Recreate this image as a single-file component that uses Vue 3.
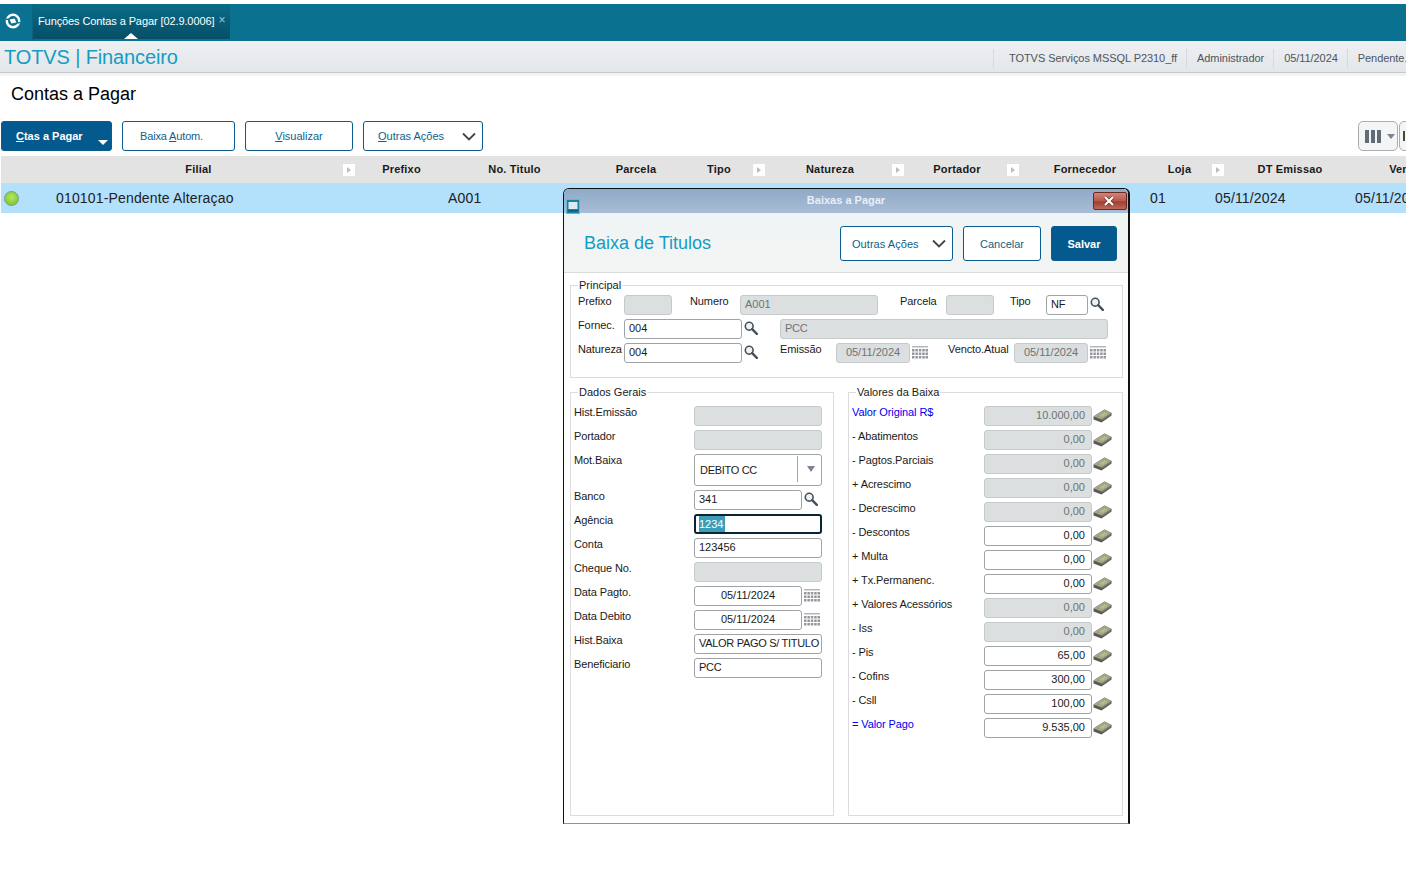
<template>
  <div class="page">
    <svg class="sprite" aria-hidden="true">
      <symbol id="i-search" viewBox="0 0 14 14">
        <circle cx="5.2" cy="5.2" r="3.9" fill="#eef2f4" stroke="#46505a" stroke-width="1.6" />
        <path d="M8.2 8.2l4.6 4.6" stroke="#46505a" stroke-width="2.4" stroke-linecap="round" />
      </symbol>
      <symbol id="i-cal" viewBox="0 0 16 14">
        <path d="M0 0h16v1.5H0z" fill="#b4b7ba" />
        <path
          d="M0 3h2.5v2.5H0zM3.4 3h2.5v2.5H3.4zM6.8 3h2.5v2.5H6.8zM10.2 3h2.5v2.5h-2.5zM13.5 3H16v2.5h-2.5zM0 6.5h2.5V9H0zM3.4 6.5h2.5V9H3.4zM6.8 6.5h2.5V9H6.8zM10.2 6.5h2.5V9h-2.5zM13.5 6.5H16V9h-2.5zM0 10h2.5v2.5H0zM3.4 10h2.5v2.5H3.4zM6.8 10h2.5v2.5H6.8zM10.2 10h2.5v2.5h-2.5zM13.5 10H16v2.5h-2.5z"
          fill="#93979b"
        />
      </symbol>
      <symbol id="i-money" viewBox="0 0 19 14">
        <path d="M0.5 7.5L11.5 0.5 18.5 4 18.5 6.5 8.5 13.5 0.5 10.5z" fill="#5e584e" />
        <path d="M0.5 7.5L11.5 0.5 18.5 4 8.5 10.5z" fill="#a3a093" />
        <path d="M6 6.6L11.3 3 14.8 4.8 9.2 8.2z" fill="#a5c676" />
        <path d="M8.5 10.5L18.5 4V5.2L8.5 11.8z" fill="#878377" />
      </symbol>
    </svg>

    <header class="topbar">
      <div class="logo">
        <svg width="16" height="16" viewBox="0 0 16 16">
          <circle cx="8" cy="8" r="6.2" fill="none" stroke="#fff" stroke-width="2.4" />
          <path d="M1 6.5L6 5.6M10 10.4L15 9.5" stroke="#0b7190" stroke-width="1.4" />
          <path d="M4.6 6.4L9.6 5.6 11.4 9.6 6.4 10.4z" fill="#fff" />
        </svg>
      </div>
      <div class="tab">
        <span>Funções Contas a Pagar [02.9.0006]</span>
        <span class="tab-close">×</span>
      </div>
    </header>

    <div class="module-bar">
      <div class="module-title">TOTVS | Financeiro</div>
      <div class="module-info">
        <span v-for="item in infoItems" :key="item">{{ item }}</span>
      </div>
    </div>

    <h1 class="page-title">Contas a Pagar</h1>

    <div class="toolbar">
      <button class="btn primary wide"><u>C</u>tas a Pagar<i class="caret-white" /></button>
      <button class="btn baixa">Baixa <u>A</u>utom.</button>
      <button class="btn visualizar"><u>V</u>isualizar</button>
      <button class="btn outras">
        <span><u>O</u>utras Ações</span>
        <svg width="14" height="9" viewBox="0 0 14 9"><path d="M1 1.5l6 6 6-6" fill="none" stroke="#444" stroke-width="1.8" /></svg>
      </button>
      <div class="col-tools">
        <div class="col-btn">
          <i class="bar" /><i class="bar" /><i class="bar" />
          <i class="caret-gray" />
        </div>
        <div class="col-btn next"><i class="bar dark" /></div>
      </div>
    </div>

    <div class="grid">
      <div class="grid-head">
        <div
          v-for="col in columns"
          :key="col.label"
          class="head-cell"
          :style="{ width: col.w + 'px', paddingRight: (col.pad || 0) + 'px' }"
        >
          {{ col.label }}
          <i v-if="col.handle" class="handle" />
        </div>
      </div>
      <div class="grid-row">
        <div class="status"><i class="led" /></div>
        <div
          v-for="cell in rowCells"
          :key="cell.text + cell.w"
          class="row-cell"
          :style="{ width: cell.w + 'px' }"
        >
          {{ cell.text }}
        </div>
      </div>
    </div>

    <section class="dialog">
      <div class="dlg-title">
        <svg class="dlg-icon" width="14" height="15" viewBox="0 0 14 15">
          <rect x="0.5" y="0.5" width="13" height="14" fill="#1583a6" stroke="#6cb6cf" />
          <rect x="2.5" y="3" width="9" height="7" fill="#dfeaf0" />
          <rect x="2" y="11" width="10" height="1.5" fill="#0b5f7c" />
        </svg>
        <span>Baixas a Pagar</span>
        <button class="dlg-close">
          <svg width="14" height="10" viewBox="0 0 14 10">
            <path d="M2 1l8 8M10 1L2 9" stroke="#6d2a22" stroke-width="3.4" />
            <path d="M2 1l8 8M10 1L2 9" stroke="#fff" stroke-width="2.2" />
          </svg>
        </button>
      </div>

      <div class="dlg-head">
        <h2>Baixa de Titulos</h2>
        <div class="dlg-actions">
          <button class="btn act-outras">
            <span>Outras Ações</span>
            <svg width="14" height="9" viewBox="0 0 14 9"><path d="M1 1.5l6 6 6-6" fill="none" stroke="#444" stroke-width="1.8" /></svg>
          </button>
          <button class="btn act-cancel">Cancelar</button>
          <button class="btn primary act-save">Salvar</button>
        </div>
      </div>

      <div class="dlg-body">
        <div class="group principal">
          <span class="group-title">Principal</span>
          <div class="p-row">
            <label class="w46">Prefixo</label>
            <div class="field off w48" />
            <label class="w50 ml18">Numero</label>
            <div class="field off w138">A001</div>
            <label class="w46 ml22">Parcela</label>
            <div class="field off w48" />
            <label class="w36 ml16">Tipo</label>
            <div class="field w42 caps">NF</div>
            <svg class="ico-search"><use href="#i-search" /></svg>
          </div>
          <div class="p-row">
            <label class="w46">Fornec.</label>
            <div class="field w118">004</div>
            <svg class="ico-search"><use href="#i-search" /></svg>
            <div class="field off w328 ml22 caps">PCC</div>
          </div>
          <div class="p-row">
            <label class="w46">Natureza</label>
            <div class="field w118">004</div>
            <svg class="ico-search"><use href="#i-search" /></svg>
            <label class="w56 ml22">Emissão</label>
            <div class="field off date w74">05/11/2024</div>
            <svg class="ico-cal"><use href="#i-cal" /></svg>
            <label class="w66 ml20">Vencto.Atual</label>
            <div class="field off date w74">05/11/2024</div>
            <svg class="ico-cal"><use href="#i-cal" /></svg>
          </div>
        </div>

        <div class="lower">
          <div class="group dados">
            <span class="group-title">Dados Gerais</span>
            <div v-for="row in dadosRows" :key="row.label" class="d-row">
              <label>{{ row.label }}</label>
              <div v-if="row.kind === 'select'" class="field select">
                <span class="caps">{{ row.value }}</span>
                <i class="select-arrow" />
              </div>
              <div v-else-if="row.kind === 'search'" class="with-icon">
                <div class="field grow">{{ row.value }}</div>
                <svg class="ico-search"><use href="#i-search" /></svg>
              </div>
              <div v-else-if="row.kind === 'date'" class="with-icon">
                <div class="field grow centered">{{ row.value }}</div>
                <svg class="ico-cal"><use href="#i-cal" /></svg>
              </div>
              <div v-else-if="row.kind === 'focus'" class="field focused">
                <span class="selected">{{ row.value }}</span>
              </div>
              <div v-else class="field" :class="{ off: row.kind === 'off', caps: row.caps }">{{ row.value }}</div>
            </div>
          </div>

          <div class="group valores">
            <span class="group-title">Valores da Baixa</span>
            <div v-for="row in valoresRows" :key="row.label" class="v-row">
              <label :class="{ blue: row.blue }">{{ row.label }}</label>
              <div class="field amount" :class="{ off: row.off }">{{ row.value }}</div>
              <svg class="ico-money"><use href="#i-money" /></svg>
            </div>
          </div>
        </div>
      </div>
    </section>
  </div>
</template>

<script setup>
const infoItems = ['TOTVS Serviços MSSQL P2310_ff', 'Administrador', '05/11/2024', 'Pendente...']

const columns = [
  { label: '', w: 40 },
  { label: 'Filial', w: 315, handle: true },
  { label: 'Prefixo', w: 91 },
  { label: 'No. Titulo', w: 135 },
  { label: 'Parcela', w: 108 },
  { label: 'Tipo', w: 76, pad: 18, handle: true },
  { label: 'Natureza', w: 139, pad: 11, handle: true },
  { label: 'Portador', w: 115, pad: 11, handle: true },
  { label: 'Fornecedor', w: 130 },
  { label: 'Loja', w: 75, pad: 16, handle: true },
  { label: 'DT Emissao', w: 130 },
  { label: 'Vencimento', w: 132 },
]

const rowCells = [
  { text: '010101-Pendente Alteraçao', w: 392 },
  { text: 'A001', w: 702 },
  { text: '01', w: 65 },
  { text: '05/11/2024', w: 140 },
  { text: '05/11/2024', w: 100 },
]

const dadosRows = [
  { label: 'Hist.Emissão', kind: 'off', value: '' },
  { label: 'Portador', kind: 'off', value: '' },
  { label: 'Mot.Baixa', kind: 'select', value: 'DEBITO CC' },
  { label: 'Banco', kind: 'search', value: '341' },
  { label: 'Agência', kind: 'focus', value: '1234' },
  { label: 'Conta', kind: 'text', value: '123456' },
  { label: 'Cheque No.', kind: 'off', value: '' },
  { label: 'Data Pagto.', kind: 'date', value: '05/11/2024' },
  { label: 'Data Debito', kind: 'date', value: '05/11/2024' },
  { label: 'Hist.Baixa', kind: 'text', value: 'VALOR PAGO S/ TITULO', caps: true },
  { label: 'Beneficiario', kind: 'text', value: 'PCC', caps: true },
]

const valoresRows = [
  { label: 'Valor Original R$', value: '10.000,00', off: true, blue: true },
  { label: '- Abatimentos', value: '0,00', off: true },
  { label: '- Pagtos.Parciais', value: '0,00', off: true },
  { label: '+ Acrescimo', value: '0,00', off: true },
  { label: '- Decrescimo', value: '0,00', off: true },
  { label: '- Descontos', value: '0,00' },
  { label: '+ Multa', value: '0,00' },
  { label: '+ Tx.Permanenc.', value: '0,00' },
  { label: '+ Valores Acessórios', value: '0,00', off: true },
  { label: '- Iss', value: '0,00', off: true },
  { label: '- Pis', value: '65,00' },
  { label: '- Cofins', value: '300,00' },
  { label: '- Csll', value: '100,00' },
  { label: '= Valor Pago', value: '9.535,00', blue: true },
]
</script>

<style>
html,
body {
  margin: 0;
  background: #fff;
  overflow: hidden;
}
</style>

<style scoped>
.page {
  position: relative;
  width: 1406px;
  height: 880px;
  overflow: hidden;
  padding-top: 4px;
  box-sizing: border-box;
  font-family: "Liberation Sans", Arial, sans-serif;
  font-size: 11px;
  color: #1a1a1a;
}
.sprite {
  position: absolute;
  width: 0;
  height: 0;
}

/* top bar */
.topbar {
  display: flex;
  height: 37px;
  background: #0b7190;
}
.logo {
  width: 33px;
  display: flex;
  justify-content: center;
  padding-top: 9px;
  box-sizing: border-box;
  padding-right: 7px;
  border-right: 1px solid #0a6480;
}
.logo svg {
  display: block;
}
.tab {
  position: relative;
  width: 197px;
  height: 35px;
  padding: 0 0 1px 5px;
  box-sizing: border-box;
  display: flex;
  align-items: center;
  color: #fff;
  background: linear-gradient(#0a6c88, #064f66);
  white-space: nowrap;
  letter-spacing: -0.1px;
}
.tab::after {
  content: "";
  position: absolute;
  left: 91px;
  bottom: 0;
  border: 7px solid transparent;
  border-top: 0;
  border-bottom: 6px solid #fff;
}
.tab-close {
  margin: -2px 0 0 4px;
  color: #a9c4cf;
  font-size: 12px;
}

/* module bar */
.module-bar {
  display: flex;
  justify-content: space-between;
  height: 31px;
  background: linear-gradient(#eef0f2, #e3e6ea);
  border-bottom: 1px solid #c4c7cb;
  box-shadow: 0 3px 0 #f3f3f3;
}
.module-title {
  padding: 4px 0 0 4px;
  font-size: 20px;
  line-height: 25px;
  letter-spacing: -0.12px;
  color: #149cc4;
}
.module-info {
  width: 413px;
  display: flex;
  align-items: center;
  padding-top: 3px;
  box-sizing: border-box;
  overflow: hidden;
  white-space: nowrap;
  color: #4c5560;
  letter-spacing: -0.06px;
}
.module-info span {
  line-height: 19px;
  padding: 0 9px 0 10px;
  border-left: 1px solid #d5d8dc;
}
.module-info span:first-child {
  padding-left: 15px;
}

.page-title {
  margin: 0;
  padding: 9px 0 0 11px;
  font-size: 18px;
  line-height: 24px;
  font-weight: 400;
  color: #000;
}

/* toolbar */
.toolbar {
  display: flex;
  gap: 10px;
  margin-top: 15px;
  padding-left: 1px;
  height: 30px;
}
.btn {
  height: 100%;
  position: relative;
  padding: 0;
  font: inherit;
  color: #0f5f88;
  background: #fff;
  border: 1px solid #0b5b8c;
  border-radius: 3px;
}
.btn.primary {
  background: #045a8f;
  color: #fff;
  font-weight: 700;
}
.wide {
  width: 111px;
  text-align: left;
  padding-left: 14px;
}
.baixa {
  width: 113px;
  text-align: left;
  padding-left: 17px;
  letter-spacing: -0.15px;
}
.visualizar {
  width: 108px;
}
.outras {
  width: 120px;
  display: flex;
  align-items: center;
  justify-content: space-between;
  padding: 0 6px 0 14px;
}
.caret-white {
  position: absolute;
  right: 3px;
  bottom: 5px;
  border: 5px solid transparent;
  border-bottom: 0;
  border-top: 5px solid #fff;
}
.col-tools {
  display: flex;
  gap: 1px;
  margin-left: auto;
  margin-right: -33px;
}
.col-btn {
  width: 40px;
  box-sizing: border-box;
  display: flex;
  align-items: center;
  gap: 2px;
  padding-left: 6px;
  background: #f4f5f7;
  border: 1px solid #a9adb2;
  border-radius: 5px;
}
.col-btn.next {
  padding-left: 3px;
}
.bar {
  width: 4px;
  height: 13px;
  background: #626b78;
}
.bar.dark {
  width: 2px;
  height: 10px;
  background: #4b4b3a;
}
.caret-gray {
  margin-left: 4px;
  border: 4px solid transparent;
  border-bottom: 0;
  border-top: 5px solid #7b8490;
}

/* grid */
.grid {
  margin: 5px 0 0 1px;
  width: 1600px;
}
.grid-head {
  display: flex;
  height: 27px;
  background: #e3e3e3;
}
.head-cell {
  position: relative;
  flex: none;
  box-sizing: border-box;
  text-align: center;
  line-height: 27px;
  font-weight: 700;
  letter-spacing: 0.2px;
  color: #1a1a1a;
}
.handle {
  position: absolute;
  right: 1px;
  top: 8px;
  width: 12px;
  height: 12px;
  background: #fff;
}
.handle::after {
  content: "";
  position: absolute;
  left: 4px;
  top: 3px;
  border: 3px solid transparent;
  border-right: 0;
  border-left: 4px solid #bdbdbd;
}
.grid-row {
  display: flex;
  align-items: center;
  height: 30px;
  background: #b3e0fb;
  font-size: 14px;
  letter-spacing: 0.16px;
  color: #222;
}
.status {
  flex: none;
  width: 55px;
  padding-left: 3px;
  box-sizing: border-box;
}
.led {
  display: block;
  width: 15px;
  height: 15px;
  box-sizing: border-box;
  border-radius: 50%;
  border: 1px solid #7f9c74;
  background: radial-gradient(circle at 50% 40%, #b4ea5a, #6fbc2c);
}
.row-cell {
  flex: none;
  white-space: nowrap;
}

/* dialog */
.dialog {
  position: absolute;
  left: 563px;
  top: 188px;
  width: 567px;
  height: 636px;
  box-sizing: border-box;
  display: flex;
  flex-direction: column;
  background: #fff;
  border: 1px solid #111;
  border-right-width: 2px;
  border-bottom: 1px solid #3ab4cf;
  border-radius: 6px 6px 0 0;
}
.dlg-title {
  position: relative;
  flex: none;
  height: 24px;
  padding-bottom: 2px;
  box-sizing: border-box;
  display: flex;
  align-items: center;
  justify-content: center;
  font-weight: 700;
  color: #e8eff6;
  background: linear-gradient(#8fa9c7, #a9bdd6);
  border-radius: 5px 5px 0 0;
}
.dlg-icon {
  position: absolute;
  left: 2px;
  bottom: -1px;
}
.dlg-close {
  position: absolute;
  right: 1px;
  top: 3px;
  width: 34px;
  height: 18px;
  padding: 0;
  display: flex;
  align-items: center;
  justify-content: center;
  background: linear-gradient(#cf8579 0, #b5584a 50%, #a23d2d 55%, #bb6a5c 100%);
  border: 1px solid #6d2a22;
  border-radius: 2px;
}
.dlg-head {
  flex: none;
  height: 60px;
  box-sizing: border-box;
  display: flex;
  align-items: center;
  justify-content: space-between;
  padding: 0 11px 0 20px;
  background: linear-gradient(#eff4f6, #f4f4f4);
  border-bottom: 1px solid #dcdcdc;
}
.dlg-head h2 {
  margin: 0;
  font-size: 18px;
  line-height: 22px;
  font-weight: 400;
  color: #149cc4;
}
.dlg-actions {
  display: flex;
  gap: 10px;
  height: 35px;
  margin-top: 2px;
}
.act-outras {
  width: 113px;
  display: flex;
  align-items: center;
  justify-content: space-between;
  padding: 0 6px 0 11px;
  letter-spacing: 0.05px;
}
.act-cancel {
  width: 78px;
}
.act-save {
  width: 66px;
}
.dlg-body {
  padding: 12px 5px 7px 6px;
  display: flex;
  flex-direction: column;
  gap: 14px;
  flex: 1;
  min-height: 0;
}
.group {
  position: relative;
  box-sizing: border-box;
  border: 1px solid #dcdcdc;
}
.group-title {
  position: absolute;
  left: 7px;
  top: -7px;
  padding: 0 1px;
  line-height: 13px;
  background: #fff;
  white-space: nowrap;
}
.principal {
  width: 553px;
  height: 93px;
  padding: 9px 0 0 7px;
  display: flex;
  flex-direction: column;
  gap: 4px;
}
.p-row {
  display: flex;
  height: 20px;
}
label {
  flex: none;
  line-height: 13px;
  white-space: nowrap;
  letter-spacing: -0.1px;
}
.field {
  flex: none;
  height: 20px;
  box-sizing: border-box;
  padding: 0 4px;
  line-height: 17px;
  color: #1a1a1a;
  background: #fff;
  border: 1px solid #9ea3a6;
  border-radius: 3px;
  white-space: nowrap;
  overflow: hidden;
}
.field.off {
  background: #dbdfdf;
  border-color: #c6caca;
  color: #6e7376;
}
.caps {
  letter-spacing: -0.3px;
}
.date {
  text-align: center;
}
.w36 { width: 36px; }
.w42 { width: 42px; }
.w46 { width: 46px; }
.w48 { width: 48px; }
.w50 { width: 50px; }
.w56 { width: 56px; }
.w66 { width: 66px; }
.w74 { width: 74px; }
.w118 { width: 118px; }
.w138 { width: 138px; }
.w328 { width: 328px; }
.ml16 { margin-left: 16px; }
.ml18 { margin-left: 18px; }
.ml20 { margin-left: 20px; }
.ml22 { margin-left: 22px; }
.ico-search {
  flex: none;
  width: 14px;
  height: 14px;
  margin: 2px 0 0 2px;
}
.ico-cal {
  flex: none;
  width: 16px;
  height: 14px;
  margin: 3px 0 0 2px;
}
.ico-money {
  flex: none;
  width: 19px;
  height: 14px;
  margin: 3px 0 0 1px;
}
.lower {
  display: flex;
  gap: 14px;
  flex: 1;
  min-height: 0;
}
.dados {
  width: 264px;
  padding: 13px 11px 0 3px;
}
.d-row {
  display: grid;
  grid-template-columns: 120px 128px;
  margin-bottom: 4px;
}
.with-icon {
  display: flex;
  width: 128px;
}
.field.grow {
  width: 108px;
}
.centered {
  text-align: center;
}
.select {
  height: 32px;
  line-height: 31px;
  padding-left: 5px;
  display: flex;
  justify-content: space-between;
}
.select-arrow {
  position: relative;
  width: 23px;
  border-left: 1px solid #9ea3a6;
  margin: 1px -4px 3px 0;
}
.select-arrow::after {
  content: "";
  position: absolute;
  left: 9px;
  top: 10px;
  border: 4px solid transparent;
  border-bottom: 0;
  border-top: 6px solid #7b8490;
}
.field.focused {
  border: 2px solid #0b2433;
  line-height: 16px;
  padding-left: 3px;
}
.selected {
  display: inline-block;
  padding-right: 2px;
  background: #3c9db8;
  color: #fff;
}
.valores {
  width: 275px;
  padding: 13px 0 0 3px;
}
.v-row {
  display: grid;
  grid-template-columns: 132px 108px auto;
  margin-bottom: 4px;
}
.blue {
  color: #0000f0;
}
.amount {
  text-align: right;
  padding-right: 6px;
}
</style>
